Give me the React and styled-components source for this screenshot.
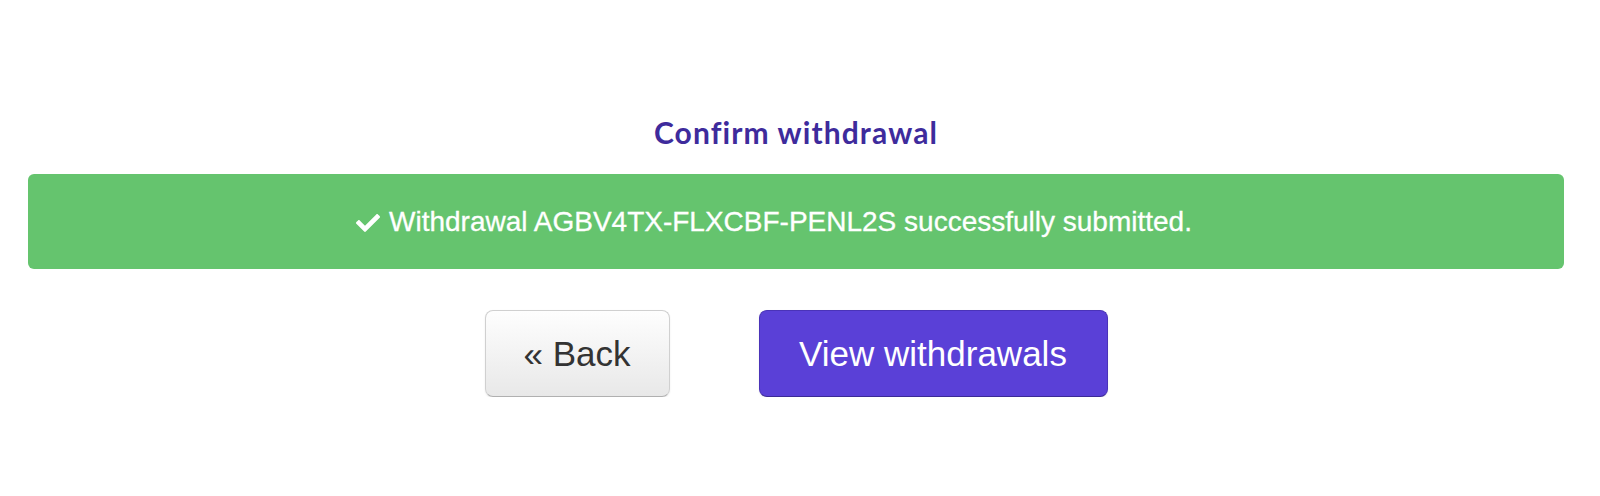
import React from 'react'
import styled, { createGlobalStyle } from 'styled-components'
import { FaCheck } from 'react-icons/fa'

const GlobalStyle = createGlobalStyle`
  html, body {
    margin: 0;
    padding: 0;
    background: #fff;
  }
`

const Confirmation = () => {
  return (
    <Content>
      <GlobalStyle />
      <Wrapper>
        <Title>Confirm withdrawal</Title>
        <Alert>
          <FaCheck className='check' />
          Withdrawal AGBV4TX-FLXCBF-PENL2S successfully submitted.
        </Alert>
        <Actions>
          <Button>« Back</Button>
          <Button primary>View withdrawals</Button>
        </Actions>
      </Wrapper>
    </Content>
  )
}

export default Confirmation

const Content = styled.div`
  width: 100%;
  box-sizing: border-box;
  padding: 0 36px 0 28px;
`

const Wrapper = styled.div`
  display: flex;
  flex-direction: column;
  align-items: center;
  padding-top: 112px;
`

const Title = styled.h2`
  margin: 0;
  font-family: Lato, "Noto Sans", sans-serif;
  font-weight: 700;
  font-size: 30px;
  letter-spacing: 1.1px;
  line-height: 40px;
  color: #3e2b9c;
`

const Alert = styled.div`
  box-sizing: border-box;
  width: 100%;
  height: 95px;
  margin-top: 22px;
  padding-right: 44px;
  border-radius: 6px;
  background: #65c46e;
  color: #fff;
  font-family: "Liberation Sans", Arial, sans-serif;
  font-size: 28px;
  -webkit-text-stroke: 0.3px #fff;
  display: flex;
  align-items: center;
  justify-content: center;
  gap: 9px;

  .check{
    width: 24px;
    height: 24px;
    margin-top: 2px;
  }
`

const Actions = styled.div`
  display: flex;
  justify-content: center;
  gap: 89px;
  margin-top: 41px;
`

const Button = styled.button`
  box-sizing: border-box;
  height: 87px;
  padding: 0 ${(p) => (p.primary ? '39px' : '38px')};
  min-width: ${(p) => (p.primary ? '349px' : '185px')};
  border-radius: 8px;
  font-family: "Liberation Sans", Arial, sans-serif;
  font-size: 35px;
  cursor: pointer;
  color: ${(p) => (p.primary ? '#fff' : '#333')};
  background: ${(p) =>
    p.primary ? '#5a40d7' : 'linear-gradient(#fefefe, #e8e8e8)'};
  border: 1px solid ${(p) => (p.primary ? '#4a33b8' : '#d0d0d0')};
  border-bottom-color: ${(p) => (p.primary ? '#3b2a96' : '#b0b0b0')};
  box-shadow: 0 1px 2px rgba(0, 0, 0, 0.08);
`
